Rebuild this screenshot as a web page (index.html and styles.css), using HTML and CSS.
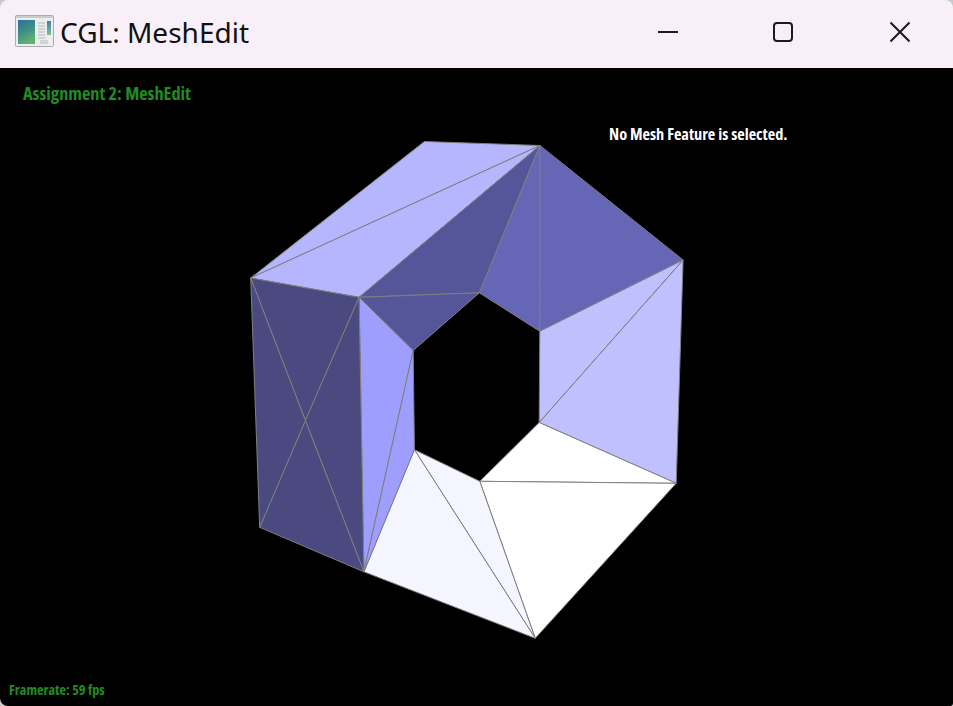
FILE: index.html

```html
<!DOCTYPE html>
<html lang="en">
<head>
  <meta charset="UTF-8" />
  <meta name="viewport" content="width=device-width, initial-scale=1.0"/>
  <title>CGL: MeshEdit</title>
  <link rel="stylesheet" href="styles.css">
</head>
<body>
  <div class="window">
    <div class="titlebar">
      <svg class="app-icon" viewBox="0 0 40 32" width="40" height="32">
        <defs>
          <linearGradient id="iconFill" x1="0" y1="0" x2="0.4" y2="1">
            <stop offset="0" stop-color="#2f6f9c"/>
            <stop offset="0.55" stop-color="#3f8f88"/>
            <stop offset="1" stop-color="#62b070"/>
          </linearGradient>
          <linearGradient id="iconStrip" x1="0" y1="0" x2="0" y2="1">
            <stop offset="0" stop-color="#3b7fa0"/>
            <stop offset="1" stop-color="#7fc09a"/>
          </linearGradient>
        </defs>
        <rect x="0.5" y="0.5" width="38" height="31" rx="1" fill="#eceeee" stroke="#a9adb0"/>
        <rect x="1" y="1" width="37" height="2" fill="#c9cccd"/>
        <rect x="3" y="5" width="17" height="24" fill="url(#iconFill)"/>
        <rect x="32" y="6" width="4" height="14" fill="url(#iconStrip)"/>
        <g class="icon-lines">
          <path d="M23 8h7M23 11h7M23 14h7M23 17h7M23 20h7M23 23h7M25 26h8M25 28h8"/>
        </g>
      </svg>
      <div class="window-title">CGL: MeshEdit</div>
      <div class="controls">
        <svg class="ctl" viewBox="0 0 20 20" width="20" height="20"><path d="M0 10h20"/></svg>
        <svg class="ctl" viewBox="0 0 20 20" width="20" height="20"><rect x="1" y="1" width="18" height="18" rx="3"/></svg>
        <svg class="ctl ctl-close" viewBox="0 0 20 20" width="20" height="20"><path d="M0.5 0.5l19 19M19.5 0.5l-19 19"/></svg>
      </div>
    </div>

    <div class="viewport">
      <svg class="mesh" viewBox="0 0 953 638" width="953" height="638">
        <!-- page y minus 68 -->
        <g class="edges" transform="translate(0.4 0.5)">
          <polygon class="roof" points="424,73 539.5,77 250.3,209.5"/>
          <polygon class="roof" points="250.3,209.5 539.5,77 358.7,228.8"/>
          <polygon class="shade" points="358.7,228.8 539.5,77 479,224.3"/>
          <polygon class="shade" points="358.7,228.8 479,224.3 412.8,282"/>
          <polygon class="slope" points="479,224.3 539.5,77 539.4,262.8"/>
          <polygon class="slope" points="539.5,77 682.7,191.5 539.4,262.8"/>
          <polygon class="pale" points="539.4,262.8 682.7,191.5 538.8,354"/>
          <polygon class="pale" points="682.7,191.5 675.8,414.8 538.8,354"/>
          <polygon class="white" points="538.8,354 675.8,414.8 479.4,412.8"/>
          <polygon class="white" points="479.4,412.8 675.8,414.8 534.8,569.8"/>
          <polygon class="ghost" points="414,381.2 479.4,412.8 534.8,569.8"/>
          <polygon class="ghost" points="414,381.2 534.8,569.8 363.5,503.3"/>
          <polygon class="inner" points="358.7,228.8 412.8,282 363.5,503.3"/>
          <polygon class="inner" points="412.8,282 414,381.2 363.5,503.3"/>
          <polygon class="wall" points="250.3,209.5 358.7,228.8 305,352"/>
          <polygon class="wall" points="358.7,228.8 363.5,503.3 305,352"/>
          <polygon class="wall" points="363.5,503.3 259.3,458.8 305,352"/>
          <polygon class="wall" points="259.3,458.8 250.3,209.5 305,352"/>
        </g>
      </svg>
      <div class="label heading">Assignment 2: MeshEdit</div>
      <div class="label status">No Mesh Feature is selected.</div>
      <div class="label framerate">Framerate: 59 fps</div>
    </div>
  </div>
</body>
</html>
```

FILE: styles.css

```css
html, body {
  margin: 0;
  padding: 0;
  background-color: #c8c8c8;
}
.window {
  width: 953px;
  height: 706px;
  overflow: hidden;
  border-radius: 8px 8px 3px 8px;
}
.titlebar {
  display: flex;
  align-items: center;
  box-sizing: border-box;
  height: 68px;
  padding-left: 15px;
  padding-bottom: 4px;
  background-color: #f9eff8;
}
.app-icon {
  flex: none;
  margin-right: 5px;
  margin-bottom: 2px;
}
.icon-lines path {
  stroke: #b4b8ba;
  stroke-width: 1;
  fill: none;
}
.window-title {
  font-family: 'Noto Sans', sans-serif;
  font-size: 28px;
  color: #111;
}
.controls {
  display: flex;
  gap: 95px;
  margin-left: auto;
  margin-right: 43px;
}
.ctl {
  display: block;
  fill: none;
  stroke: #1a1a1a;
  stroke-width: 2;
}
.ctl-close {
  margin-left: 2px;
}
.viewport {
  position: relative;
  height: 638px;
  background-color: #000;
}
.mesh {
  position: absolute;
  left: 0;
  top: 0;
}
.edges polygon {
  stroke: #808080;
  stroke-width: 1;
  stroke-linejoin: round;
}
.roof { fill: #b6b6ff; }
.shade { fill: #55559a; }
.slope { fill: #6666b6; }
.pale { fill: #c0c0ff; }
.white { fill: #fff; }
.ghost { fill: #f5f5ff; }
.inner { fill: #9e9eff; }
.wall { fill: #4a4a80; }
.label {
  position: absolute;
  font-family: 'Open Sans', sans-serif;
  font-weight: 700;
  font-stretch: 75%;
  white-space: nowrap;
}
.heading {
  left: 23px;
  top: 12px;
  font-size: 18.3px;
  color: #228b22;
}
.status {
  left: 609px;
  top: 55px;
  font-size: 16.3px;
  color: #fff;
}
.framerate {
  left: 9px;
  top: 612px;
  font-size: 14.2px;
  color: #228b22;
}
```
